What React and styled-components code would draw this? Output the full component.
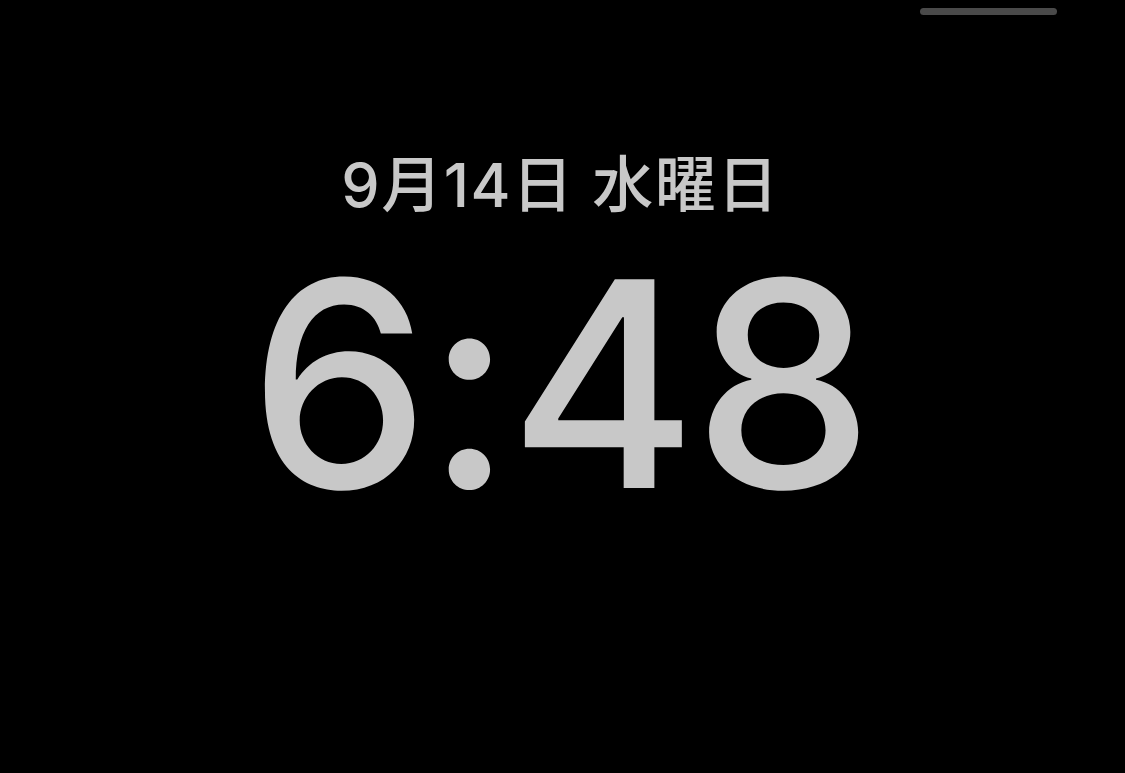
import React from 'react';
import styled, { createGlobalStyle } from 'styled-components';

const GlobalStyle = createGlobalStyle`
  html, body {
    margin: 0;
    padding: 0;
    background: #000;
  }
  body {
    font-family: Inter, "Noto Sans CJK JP", sans-serif;
  }
`;

const Screen = styled.div`
  width: 1125px;
  height: 773px;
  background: #000;
  display: flex;
  flex-direction: column;
  overflow: hidden;
`;

const TopBar = styled.div`
  display: flex;
  justify-content: flex-end;
  padding: 8px 68px 0 0;
`;

const Indicator = styled.div`
  width: 137px;
  height: 7px;
  border-radius: 4px;
  background: #4a4a4a;
`;

const Clock = styled.div`
  display: flex;
  flex-direction: column;
  align-items: center;
  color: #c8c8c8;
  padding-top: 134px;
`;

const DateLine = styled.div`
  font-family: Inter, "Noto Sans CJK JP", sans-serif;
  font-size: 61px;
  font-weight: 500;
  line-height: 72px;
  letter-spacing: 1.5px;
  margin-left: -4px;
`;

const Time = styled.div`
  font-family: Inter, sans-serif;
  font-size: 287px;
  font-weight: 500;
  line-height: 300px;
  letter-spacing: -4px;
  margin: 13px 0 0 -6px;
`;

const App = () => {
  return (
    <Screen>
      <GlobalStyle />
      <TopBar>
        <Indicator />
      </TopBar>
      <Clock>
        <DateLine>9月14日 水曜日</DateLine>
        <Time>6:48</Time>
      </Clock>
    </Screen>
  );
};

export default App;
